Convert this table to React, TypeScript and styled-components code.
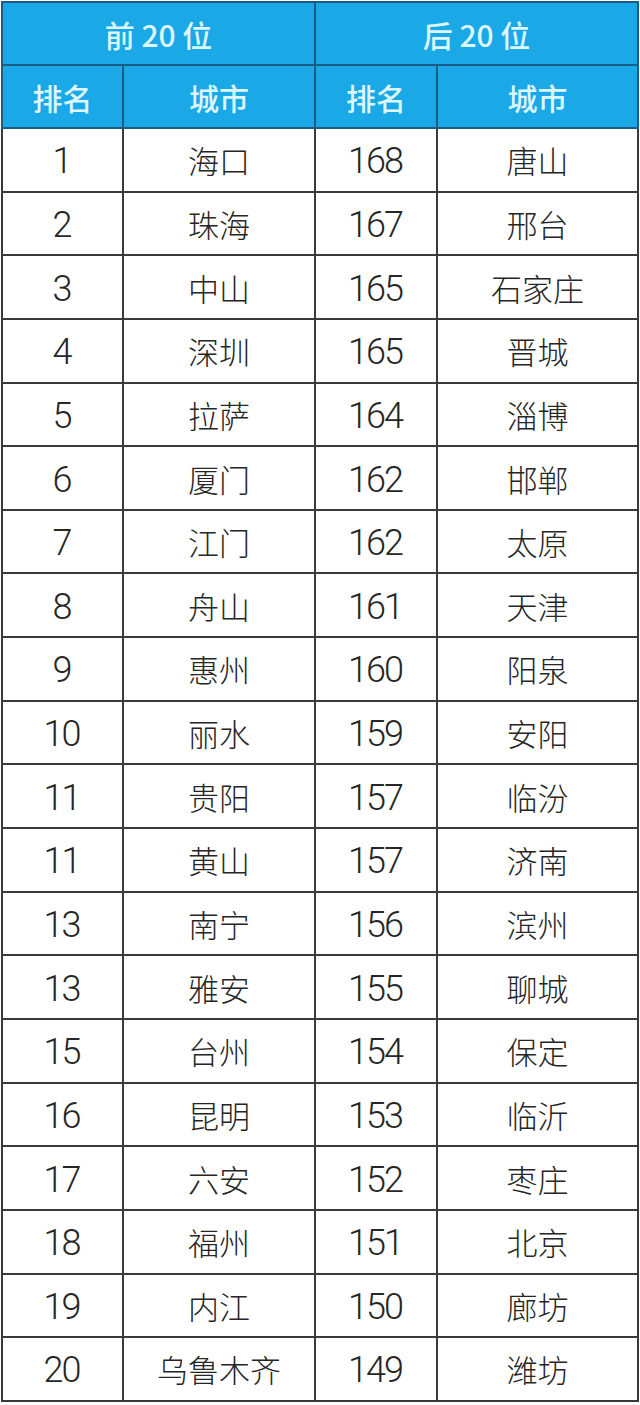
import React from "react";
import styled, { createGlobalStyle } from "styled-components";

interface IRankRow {
	topRank: string;
	topCity: string;
	bottomRank: string;
	bottomCity: string;
}

const rows: IRankRow[] = [
	{ topRank: "1", topCity: "海口", bottomRank: "168", bottomCity: "唐山" },
	{ topRank: "2", topCity: "珠海", bottomRank: "167", bottomCity: "邢台" },
	{ topRank: "3", topCity: "中山", bottomRank: "165", bottomCity: "石家庄" },
	{ topRank: "4", topCity: "深圳", bottomRank: "165", bottomCity: "晋城" },
	{ topRank: "5", topCity: "拉萨", bottomRank: "164", bottomCity: "淄博" },
	{ topRank: "6", topCity: "厦门", bottomRank: "162", bottomCity: "邯郸" },
	{ topRank: "7", topCity: "江门", bottomRank: "162", bottomCity: "太原" },
	{ topRank: "8", topCity: "舟山", bottomRank: "161", bottomCity: "天津" },
	{ topRank: "9", topCity: "惠州", bottomRank: "160", bottomCity: "阳泉" },
	{ topRank: "10", topCity: "丽水", bottomRank: "159", bottomCity: "安阳" },
	{ topRank: "11", topCity: "贵阳", bottomRank: "157", bottomCity: "临汾" },
	{ topRank: "11", topCity: "黄山", bottomRank: "157", bottomCity: "济南" },
	{ topRank: "13", topCity: "南宁", bottomRank: "156", bottomCity: "滨州" },
	{ topRank: "13", topCity: "雅安", bottomRank: "155", bottomCity: "聊城" },
	{ topRank: "15", topCity: "台州", bottomRank: "154", bottomCity: "保定" },
	{ topRank: "16", topCity: "昆明", bottomRank: "153", bottomCity: "临沂" },
	{ topRank: "17", topCity: "六安", bottomRank: "152", bottomCity: "枣庄" },
	{ topRank: "18", topCity: "福州", bottomRank: "151", bottomCity: "北京" },
	{ topRank: "19", topCity: "内江", bottomRank: "150", bottomCity: "廊坊" },
	{ topRank: "20", topCity: "乌鲁木齐", bottomRank: "149", bottomCity: "潍坊" },
];

const GlobalStyle = createGlobalStyle`
	body {
		margin: 0;
		background: #ffffff;
	}
`;

export default function App() {
	return (
		<Page>
			<GlobalStyle />
			<RankTable>
				<colgroup>
					<col style={{ width: 121 }} />
					<col style={{ width: 192 }} />
					<col style={{ width: 122 }} />
					<col style={{ width: 201 }} />
				</colgroup>
				<thead>
					<tr>
						<HeadCell colSpan={2}>前 20 位</HeadCell>
						<HeadCell colSpan={2}>后 20 位</HeadCell>
					</tr>
					<tr>
						<HeadCell>排名</HeadCell>
						<HeadCell>城市</HeadCell>
						<HeadCell>排名</HeadCell>
						<HeadCell>城市</HeadCell>
					</tr>
				</thead>
				<tbody>
					{rows.map((r, i) => (
						<tr key={i}>
							<NumCell>{r.topRank}</NumCell>
							<CityCell>{r.topCity}</CityCell>
							<NumCell>{r.bottomRank}</NumCell>
							<CityCell>{r.bottomCity}</CityCell>
						</tr>
					))}
				</tbody>
			</RankTable>
		</Page>
	);
}

const Page = styled.div`
	padding: 1px 0 0 1px;
	width: 640px;
	box-sizing: border-box;
`;

const RankTable = styled.table`
	border-collapse: collapse;
	table-layout: fixed;
	width: 636px;
`;

const HeadCell = styled.th`
	background: #1aa8e7;
	color: #dcf7ff;
	border: 2px solid #1b5c86;
	font-family: "Noto Sans CJK SC", sans-serif;
	font-weight: 500;
	font-size: 30px;
	text-align: center;
	height: 61px;
	padding: 0;
`;

const BodyCell = styled.td`
	border: 2px solid #3a3a3a;
	color: #262626;
	text-align: center;
	height: 61.65px;
	padding: 0;
`;

const NumCell = styled(BodyCell)`
	font-family: "Roboto", "Liberation Sans", sans-serif;
	font-weight: 300;
	font-size: 36px;
	letter-spacing: -2px;
	text-indent: -2px;
	height: 58.65px;
	padding-top: 3px;
	line-height: 1;
`;

const CityCell = styled(BodyCell)`
	font-family: "Noto Sans CJK SC", sans-serif;
	font-weight: 300;
	font-size: 31px;
	line-height: 1;
`;
